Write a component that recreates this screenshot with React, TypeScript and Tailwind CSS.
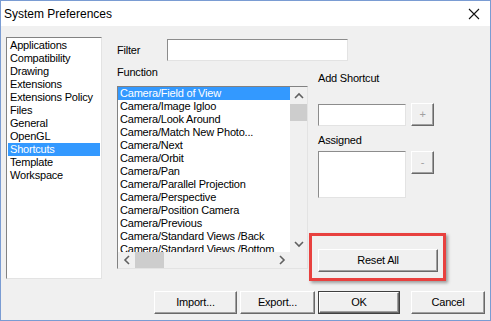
const sections = [
  "Applications",
  "Compatibility",
  "Drawing",
  "Extensions",
  "Extensions Policy",
  "Files",
  "General",
  "OpenGL",
  "Shortcuts",
  "Template",
  "Workspace",
];

const functions = [
  "Camera/Field of View",
  "Camera/Image Igloo",
  "Camera/Look Around",
  "Camera/Match New Photo...",
  "Camera/Next",
  "Camera/Orbit",
  "Camera/Pan",
  "Camera/Parallel Projection",
  "Camera/Perspective",
  "Camera/Position Camera",
  "Camera/Previous",
  "Camera/Standard Views /Back",
  "Camera/Standard Views /Bottom",
];

const Chevron = ({ dir }: { dir: "up" | "down" | "left" | "right" }) => {
  const pts = {
    up: "1,6 5,2 9,6",
    down: "1,2 5,6 9,2",
    left: "6,1 2,5 6,9",
    right: "2,1 6,5 2,9",
  }[dir];
  const vertical = dir === "up" || dir === "down";
  return (
    <svg
      width={vertical ? 10 : 8}
      height={vertical ? 8 : 10}
      viewBox={vertical ? "0 0 10 8" : "0 0 8 10"}
    >
      <polyline points={pts} fill="none" stroke="#606060" strokeWidth="1.6" />
    </svg>
  );
};

const WinButton = ({
  label,
  width,
  isDefault,
  disabled,
}: {
  label: string;
  width: string;
  isDefault?: boolean;
  disabled?: boolean;
}) => (
  <div
    className={
      isDefault
        ? `${width} h-[23px] border border-[#404040] bg-[#f0f0f0] flex`
        : `${width} h-[23px] flex`
    }
  >
    <div
      className={
        disabled
          ? "flex-1 flex items-center justify-center border border-t-white border-l-white border-r-[#696969] border-b-[#696969] shadow-[inset_-1px_-1px_0_#a0a0a0] bg-[#f0f0f0] text-[#a0a0a0]"
          : "flex-1 flex items-center justify-center border border-t-white border-l-white border-r-[#696969] border-b-[#696969] shadow-[inset_-1px_-1px_0_#a0a0a0] bg-[#f0f0f0] text-black"
      }
    >
      {label}
    </div>
  </div>
);

const App = () => {
  return (
    <div
      className="w-[491px] h-[321px] border border-[#7a9cd3] bg-[#f0f0f0] flex flex-col text-[11px] tracking-[-0.2px] text-black"
      style={{ fontFamily: '"Liberation Sans", Arial, sans-serif' }}
    >
      {/* title bar */}
      <div className="h-[25px] bg-white flex items-center justify-between pl-[3px] pr-[10px]">
        <span className="text-[12px] tracking-normal">System Preferences</span>
        <svg width="12" height="12" viewBox="0 0 12 12">
          <path d="M1 1 L11 11 M11 1 L1 11" stroke="#111" strokeWidth="1.1" />
        </svg>
      </div>

      <div className="flex flex-col px-[5px] pt-[11px]">
        <div className="flex">
          {/* left category list */}
          <div className="w-[96px] h-[242px] bg-white border border-t-[#828282] border-l-[#828282] border-r-[#e3e3e3] border-b-[#e3e3e3] pt-[1px] px-[1px]">
            {sections.map((s) => (
              <div
                key={s}
                className={
                  s === "Shortcuts"
                    ? "h-[13px] leading-[13px] pl-[2px] bg-[#3399ff] text-white"
                    : "h-[13px] leading-[13px] pl-[2px]"
                }
              >
                {s}
              </div>
            ))}
          </div>

          <div className="ml-[15px] pt-[2px] flex flex-col">
            {/* filter row */}
            <div className="flex items-center">
              <span className="w-[50px]">Filter</span>
              <div className="w-[181px] h-[22px] bg-white border border-t-[#8c8c8c] border-l-[#8c8c8c] border-r-[#e3e3e3] border-b-[#e3e3e3]" />
            </div>

            <div className="flex">
              {/* function column */}
              <div className="flex flex-col">
                <div className="mt-[5px] h-[13px] leading-[13px]">Function</div>
                <div className="mt-[7px] w-[191px] h-[183px] border border-t-[#828282] border-l-[#828282] border-r-[#e3e3e3] border-b-[#e3e3e3] flex flex-col">
                  <div className="flex flex-1 min-h-0">
                    <div className="flex-1 bg-white overflow-hidden">
                      {functions.map((f, i) => (
                        <div
                          key={f}
                          className={
                            i === 0
                              ? "h-[13px] leading-[13px] pl-[2px] whitespace-nowrap bg-[#3399ff] text-white"
                              : "h-[13px] leading-[13px] pl-[2px] whitespace-nowrap"
                          }
                        >
                          {f}
                        </div>
                      ))}
                    </div>
                    <div className="w-[17px] bg-[#f0f0f0] flex flex-col">
                      <div className="h-[17px] flex items-center justify-center">
                        <Chevron dir="up" />
                      </div>
                      <div className="h-[17px] bg-[#cdcdcd]" />
                      <div className="flex-1" />
                      <div className="h-[17px] flex items-center justify-center">
                        <Chevron dir="down" />
                      </div>
                    </div>
                  </div>
                  <div className="h-[16px] flex bg-[#f0f0f0]">
                    <div className="w-[17px] flex items-center justify-center">
                      <Chevron dir="left" />
                    </div>
                    <div className="w-[29px] bg-[#cdcdcd]" />
                    <div className="flex-1" />
                    <div className="w-[17px] flex items-center justify-center">
                      <Chevron dir="right" />
                    </div>
                    <div className="w-[17px]" />
                  </div>
                </div>
              </div>

              {/* shortcut column */}
              <div className="ml-[10px] flex flex-col">
                <div className="mt-[11px] h-[13px] leading-[13px]">Add Shortcut</div>
                <div className="mt-[18px] flex items-center gap-[5px]">
                  <div className="w-[88px] h-[22px] bg-white border border-t-[#8c8c8c] border-l-[#8c8c8c] border-r-[#e3e3e3] border-b-[#e3e3e3]" />
                  <WinButton label="+" width="w-[23px]" disabled />
                </div>
                <div className="mt-[8px] h-[13px] leading-[13px]">Assigned</div>
                <div className="mt-[4px] flex items-start gap-[5px]">
                  <div className="w-[88px] h-[47px] bg-white border border-t-[#8c8c8c] border-l-[#8c8c8c] border-r-[#e3e3e3] border-b-[#e3e3e3]" />
                  <WinButton label="-" width="w-[23px]" disabled />
                </div>
                <div className="mt-[51px] relative w-[120px]">
                  <WinButton label="Reset All" width="w-[120px]" />
                  <div className="absolute -left-[9px] -right-[8px] -top-[16px] -bottom-[9px] border-[3px] border-[#e8413f] shadow-[2px_2px_3px_rgba(0,0,0,0.35)]" />
                </div>
              </div>
            </div>
          </div>
        </div>

        {/* bottom buttons */}
        <div className="mt-[12px] flex pl-[148px]">
          <WinButton label="Import..." width="w-[83px]" />
          <div className="w-[3px]" />
          <WinButton label="Export..." width="w-[75px]" />
          <div className="w-[3px]" />
          <WinButton label="OK" width="w-[82px]" isDefault />
          <div className="w-[11px]" />
          <WinButton label="Cancel" width="w-[74px]" />
        </div>
      </div>
    </div>
  );
};

export default App;
